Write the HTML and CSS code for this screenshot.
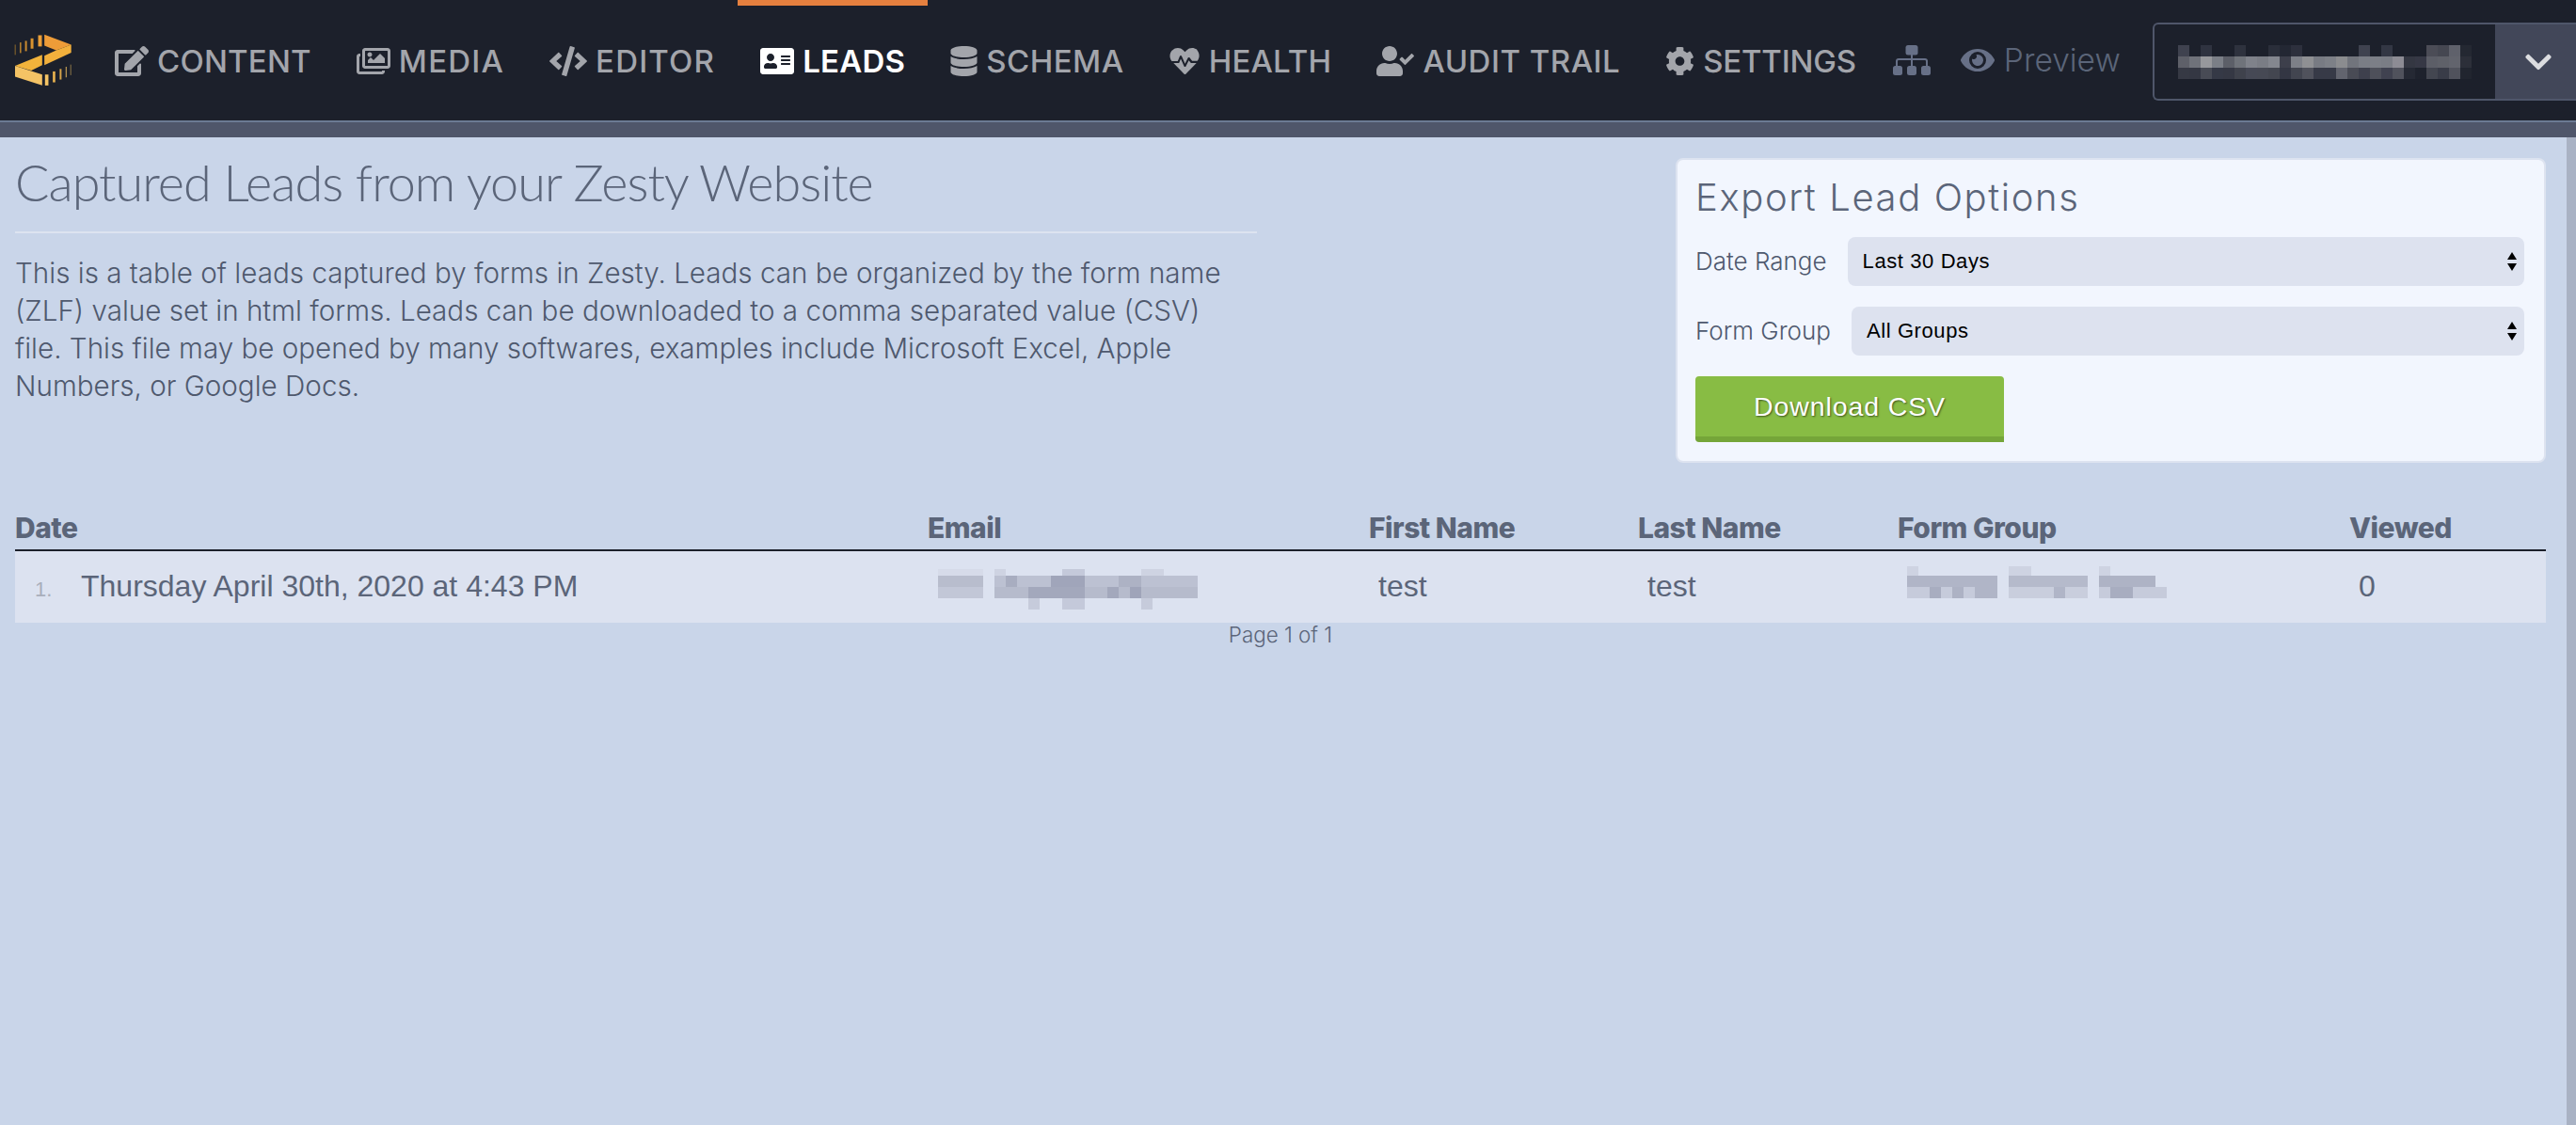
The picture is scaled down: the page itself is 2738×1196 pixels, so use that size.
FILE: index.html
```html
<!DOCTYPE html>
<html lang="en">
<head>
<meta charset="utf-8">
<title>Leads</title>
<link rel="stylesheet" href="styles.css">
</head>
<body>
<header class="topbar">
  <svg class="logo" viewBox="45 48 187 168" aria-hidden="true">
    <polygon points="142,50 228,82 180,100 142,85" fill="#ee9c38"/>
    <polygon points="228,82 228,108 142,148 142,118 180,100" fill="#f2b03c"/>
    <polygon points="135,115 48,150 100,165 135,148" fill="#f2b33b"/>
    <polygon points="48,150 135,178 135,213 48,185" fill="#f4c365"/>
    <g fill="#d8922f">
      <rect x="47" y="82" width="3" height="33" fill="#8f6a2c"/>
      <rect x="63" y="75" width="5" height="34" fill="#b07c2e"/>
      <rect x="80" y="70" width="6" height="33" fill="#c98a30"/>
      <rect x="98" y="62" width="9" height="33"/>
      <rect x="122" y="52" width="12" height="36" fill="#ec9f38"/>
    </g>
    <g fill="#e8b24e">
      <rect x="144" y="178" width="11" height="35" fill="#f4c365"/>
      <rect x="169" y="168" width="8" height="35"/>
      <rect x="191" y="160" width="6" height="34" fill="#d6a349"/>
      <rect x="210" y="153" width="4" height="34" fill="#b08f50"/>
      <rect x="225" y="146" width="3" height="34" fill="#8c7748"/>
    </g>
  </svg>
  <nav class="nav">
    <a class="nav-item"><svg class="ico" viewBox="0 0 576 512"><path d="M402.6 83.2l90.2 90.2c3.8 3.8 3.8 10 0 13.8L274.4 405.6l-92.8 10.3c-12.4 1.4-22.9-9.1-21.5-21.5l10.3-92.8L388.8 83.2c3.8-3.8 10-3.8 13.8 0zm162-22.9l-48.8-48.8c-15.2-15.2-39.9-15.2-55.2 0l-35.4 35.4c-3.8 3.8-3.8 10 0 13.8l90.2 90.2c3.8 3.8 10 3.8 13.8 0l35.4-35.4c15.2-15.3 15.2-40 0-55.2zM384 346.2V448H64V128h229.8c3.2 0 6.2-1.3 8.5-3.5l40-40c7.6-7.6 2.2-20.5-8.5-20.5H48C21.5 64 0 85.5 0 112v352c0 26.5 21.5 48 48 48h352c26.5 0 48-21.5 48-48V306.2c0-10.7-12.9-16-20.5-8.5l-40 40c-2.2 2.3-3.5 5.3-3.5 8.5z"/></svg>CONTENT</a>
    <a class="nav-item spaced-lg"><svg class="ico" viewBox="0 0 576 512"><path d="M480 416v16c0 26.51-21.49 48-48 48H48c-26.51 0-48-21.49-48-48V176c0-26.51 21.49-48 48-48h16v48H54a6 6 0 0 0-6 6v244a6 6 0 0 0 6 6h372a6 6 0 0 0 6-6v-10h48zm42-336H150a6 6 0 0 0-6 6v244a6 6 0 0 0 6 6h372a6 6 0 0 0 6-6V86a6 6 0 0 0-6-6zm6-48c26.51 0 48 21.49 48 48v256c0 26.51-21.49 48-48 48H144c-26.51 0-48-21.49-48-48V80c0-26.51 21.49-48 48-48h384zM264 144c0 22.091-17.909 40-40 40s-40-17.909-40-40 17.909-40 40-40 40 17.909 40 40zm-72 96l39.515-39.515c4.686-4.686 12.284-4.686 16.971 0L288 240l103.515-103.515c4.686-4.686 12.284-4.686 16.971 0L480 208v80H192v-48z"/></svg>MEDIA</a>
    <a class="nav-item spaced-lg"><svg class="ico ico-wide" viewBox="0 0 640 512"><path d="M278.9 511.5l-61-17.7c-6.4-1.8-10-8.5-8.2-14.9L346.2 8.7c1.8-6.4 8.5-10 14.9-8.2l61 17.7c6.4 1.8 10 8.5 8.2 14.9L293.8 503.3c-1.9 6.4-8.5 10.1-14.9 8.2zm-114-112.2l43.5-46.4c4.6-4.9 4.3-12.7-.8-17.2L117 256l90.6-79.7c5.1-4.5 5.5-12.3.8-17.2l-43.5-46.4c-4.5-4.8-12.1-5.1-17-.5L3.8 247.2c-5.1 4.7-5.1 12.8 0 17.5l144.1 135.1c4.9 4.6 12.5 4.4 17-.5zm327.2.6l144.1-135.1c5.1-4.7 5.1-12.8 0-17.5L492.1 112.1c-4.8-4.5-12.4-4.3-17 .5L431.6 159c-4.6 4.9-4.3 12.7.8 17.2L523 256l-90.6 79.7c-5.1 4.5-5.5 12.3-.8 17.2l43.5 46.4c4.5 4.9 12.1 5.1 17 .6z"/></svg>EDITOR</a>
    <a class="nav-item is-active"><svg class="ico" viewBox="0 0 576 512"><path d="M528 32H48C21.5 32 0 53.5 0 80v352c0 26.5 21.5 48 48 48h480c26.5 0 48-21.5 48-48V80c0-26.5-21.5-48-48-48zm-352 96c35.3 0 64 28.7 64 64s-28.7 64-64 64-64-28.7-64-64 28.7-64 64-64zm112 236.8c0 10.6-10 19.2-22.4 19.2H86.4C74 384 64 375.4 64 364.8v-19.2c0-31.8 30.1-57.6 67.2-57.6h5c12.3 5.1 25.7 8 39.8 8s27.6-2.9 39.8-8h5c37.1 0 67.2 25.8 67.2 57.6v19.2zM512 312c0 4.4-3.6 8-8 8H360c-4.4 0-8-3.6-8-8v-16c0-4.4 3.6-8 8-8h144c4.4 0 8 3.6 8 8v16zm0-64c0 4.4-3.6 8-8 8H360c-4.4 0-8-3.6-8-8v-16c0-4.4 3.6-8 8-8h144c4.4 0 8 3.6 8 8v16zm0-64c0 4.4-3.6 8-8 8H360c-4.4 0-8-3.6-8-8v-16c0-4.4 3.6-8 8-8h144c4.4 0 8 3.6 8 8v16z"/></svg>LEADS</a>
    <a class="nav-item spaced-sm"><svg class="ico ico-db" viewBox="0 0 448 512"><path d="M448 73.143v45.714C448 159.143 347.667 192 224 192S0 159.143 0 118.857V73.143C0 32.857 100.333 0 224 0s224 32.857 224 73.143zM448 176v102.857C448 319.143 347.667 352 224 352S0 319.143 0 278.857V176c48.125 33.143 136.208 48.572 224 48.572S399.874 209.143 448 176zm0 160v102.857C448 479.143 347.667 512 224 512S0 479.143 0 438.857V336c48.125 33.143 136.208 48.572 224 48.572S399.874 369.143 448 336z"/></svg>SCHEMA</a>
    <a class="nav-item"><svg class="ico ico-heart" viewBox="0 0 512 512"><path d="M320.2 243.8l-49.7 99.4c-6 12.1-23.4 11.7-28.9-.6l-56.9-126.3-30 71.7H60.6l182.5 186.5c7.1 7.3 18.6 7.3 25.7 0L451.4 288h-93.6l-37.6-44.2zM473.7 73.9l-2.4-2.5c-51.5-52.6-135.8-52.6-187.4 0L256 100l-27.9-28.5c-51.5-52.7-135.9-52.7-187.4 0l-2.4 2.4C-10.4 123.7-12.5 203 31 256h102.4l35.9-86.2c5.4-12.9 23.6-13.2 29.4-.4l58.2 129.3 49-97.9c5.6-11.1 20.7-12.9 28.8-3.5l43.1 52.8h88.7c43.5-53 41.4-132.3-7.6-182z"/></svg>HEALTH</a>
    <a class="nav-item spaced-sm"><svg class="ico ico-wide" viewBox="0 0 640 512"><path d="M224 256c70.7 0 128-57.3 128-128S294.7 0 224 0 96 57.3 96 128s57.3 128 128 128zm89.6 32h-16.7c-22.2 10.2-46.9 16-72.9 16s-50.6-5.8-72.9-16h-16.7C60.2 288 0 348.2 0 422.4V464c0 26.5 21.5 48 48 48h352c26.5 0 48-21.5 48-48v-41.6c0-74.2-60.2-134.4-134.4-134.4zm323-128.4l-27.8-28.1c-4.6-4.7-12.1-4.7-16.8-.1l-104.8 104-45.5-45.8c-4.6-4.7-12.1-4.7-16.8-.1l-28.1 27.9c-4.7 4.6-4.7 12.1-.1 16.8l81.7 82.3c4.6 4.7 12.1 4.7 16.8.1l141.3-140.2c4.6-4.7 4.7-12.2.1-16.8z"/></svg>AUDIT TRAIL</a>
    <a class="nav-item spaced-none"><svg class="ico ico-gear" viewBox="0 0 512 512"><path d="M487.4 315.7l-42.6-24.6c4.3-23.2 4.3-47 0-70.2l42.6-24.6c4.9-2.8 7.1-8.6 5.5-14-11.1-35.6-30-67.8-54.7-94.6-3.8-4.1-10-5.1-14.8-2.3L380.8 110c-17.9-15.4-38.5-27.3-60.8-35.1V25.8c0-5.6-3.9-10.5-9.4-11.7-36.7-8.2-74.3-7.8-109.2 0-5.5 1.2-9.4 6.1-9.4 11.7V75c-22.2 7.9-42.8 19.8-60.8 35.1L88.7 85.5c-4.9-2.8-11-1.9-14.8 2.3-24.7 26.7-43.6 58.9-54.7 94.6-1.7 5.4.6 11.2 5.5 14L67.3 221c-4.3 23.2-4.3 47 0 70.2l-42.6 24.6c-4.9 2.8-7.1 8.6-5.5 14 11.1 35.6 30 67.8 54.7 94.6 3.8 4.1 10 5.1 14.8 2.3l42.6-24.6c17.9 15.4 38.5 27.3 60.8 35.1v49.2c0 5.6 3.9 10.5 9.4 11.7 36.7 8.2 74.3 7.8 109.2 0 5.5-1.2 9.4-6.1 9.4-11.7v-49.2c22.2-7.9 42.8-19.8 60.8-35.1l42.6 24.6c4.9 2.8 11 1.9 14.8-2.3 24.7-26.7 43.6-58.9 54.7-94.6 1.5-5.5-.7-11.3-5.6-14.1zM256 336c-44.1 0-80-35.9-80-80s35.9-80 80-80 80 35.9 80 80-35.9 80-80 80z"/></svg>SETTINGS</a>
  </nav>
  <svg class="sitemap" viewBox="0 0 40 32"><rect x="13.500" y="0" width="13" height="10.500" rx="2.500"/><path d="M19 10h2v4h13a3 3 0 0 1 3 3v5h-2v-5a1 1 0 0 0-1-1H21v6h-2v-6H6a1 1 0 0 0-1 1v5H3v-5a3 3 0 0 1 3-3h13z"/><rect x="0" y="22" width="10" height="10" rx="2.500"/><rect x="15" y="22" width="10" height="10" rx="2.500"/><rect x="30" y="22" width="10" height="10" rx="2.500"/></svg>
  <a class="preview"><svg class="eye" viewBox="0 0 576 512"><path d="M572.52 241.4C518.29 135.59 410.93 64 288 64S57.68 135.64 3.48 241.41a32.35 32.35 0 0 0 0 29.19C57.71 376.41 165.07 448 288 448s230.32-71.64 284.52-177.41a32.35 32.35 0 0 0 0-29.19zM288 400a144 144 0 1 1 144-144 143.93 143.93 0 0 1-144 144zm0-240a95.31 95.31 0 0 0-25.31 3.79 47.85 47.85 0 0 1-66.9 66.9A95.78 95.78 0 1 0 288 160z"/></svg>Preview</a>
  <div class="account">
    <div class="account-name">
      <svg class="mosaic-nav" viewBox="0 0 26 3" shape-rendering="crispEdges">
        <rect x="0" y="0" width="1" height="1" fill="#3f424f"/><rect x="2" y="0" width="1" height="1" fill="#2f3340"/><rect x="5" y="0" width="1" height="1" fill="#2e323e"/><rect x="8" y="0" width="1" height="1" fill="#2a2e3a"/><rect x="9" y="0" width="1" height="1" fill="#232733"/><rect x="10" y="0" width="1" height="1" fill="#2d303d"/><rect x="16" y="0" width="1" height="1" fill="#3f424f"/><rect x="18" y="0" width="1" height="1" fill="#333744"/><rect x="22" y="0" width="1" height="1" fill="#4b4c56"/><rect x="23" y="0" width="1" height="1" fill="#454751"/><rect x="24" y="0" width="1" height="1" fill="#5f616b"/><rect x="25" y="0" width="1" height="1" fill="#242832"/>
        <rect x="0" y="1" width="1" height="1" fill="#5e6069"/><rect x="1" y="1" width="1" height="1" fill="#6f727a"/><rect x="2" y="1" width="1" height="1" fill="#97989c"/><rect x="3" y="1" width="1" height="1" fill="#7b7f87"/><rect x="4" y="1" width="1" height="1" fill="#5c5f68"/><rect x="5" y="1" width="1" height="1" fill="#6f737a"/><rect x="6" y="1" width="1" height="1" fill="#7f828a"/><rect x="7" y="1" width="1" height="1" fill="#7a7d85"/><rect x="8" y="1" width="1" height="1" fill="#84878f"/><rect x="9" y="1" width="1" height="1" fill="#3d3f4b"/><rect x="10" y="1" width="1" height="1" fill="#7d8088"/><rect x="11" y="1" width="1" height="1" fill="#8f9093"/><rect x="12" y="1" width="1" height="1" fill="#787b83"/><rect x="13" y="1" width="1" height="1" fill="#7d8087"/><rect x="14" y="1" width="1" height="1" fill="#8b8c8f"/><rect x="15" y="1" width="1" height="1" fill="#71747c"/><rect x="16" y="1" width="1" height="1" fill="#7a7d85"/><rect x="17" y="1" width="1" height="1" fill="#7c7f87"/><rect x="18" y="1" width="1" height="1" fill="#7a7d85"/><rect x="19" y="1" width="1" height="1" fill="#8d8c94"/><rect x="20" y="1" width="1" height="1" fill="#343742"/><rect x="21" y="1" width="1" height="1" fill="#363845"/><rect x="22" y="1" width="1" height="1" fill="#5c5e67"/><rect x="23" y="1" width="1" height="1" fill="#5f6169"/><rect x="24" y="1" width="1" height="1" fill="#62646d"/><rect x="25" y="1" width="1" height="1" fill="#2c2f39"/>
        <rect x="0" y="2" width="1" height="1" fill="#363944"/><rect x="1" y="2" width="1" height="1" fill="#343743"/><rect x="2" y="2" width="1" height="1" fill="#484b55"/><rect x="3" y="2" width="1" height="1" fill="#353946"/><rect x="4" y="2" width="1" height="1" fill="#353844"/><rect x="5" y="2" width="1" height="1" fill="#3f424c"/><rect x="6" y="2" width="1" height="1" fill="#464955"/><rect x="7" y="2" width="1" height="1" fill="#464954"/><rect x="8" y="2" width="1" height="1" fill="#434650"/><rect x="9" y="2" width="1" height="1" fill="#333643"/><rect x="10" y="2" width="1" height="1" fill="#424550"/><rect x="11" y="2" width="1" height="1" fill="#50525c"/><rect x="12" y="2" width="1" height="1" fill="#373a47"/><rect x="13" y="2" width="1" height="1" fill="#373a47"/><rect x="14" y="2" width="1" height="1" fill="#62646e"/><rect x="15" y="2" width="1" height="1" fill="#494b55"/><rect x="16" y="2" width="1" height="1" fill="#3e404d"/><rect x="17" y="2" width="1" height="1" fill="#4e505a"/><rect x="18" y="2" width="1" height="1" fill="#404250"/><rect x="19" y="2" width="1" height="1" fill="#50525c"/><rect x="20" y="2" width="1" height="1" fill="#252934"/><rect x="21" y="2" width="1" height="1" fill="#1e222d"/><rect x="22" y="2" width="1" height="1" fill="#434650"/><rect x="23" y="2" width="1" height="1" fill="#393c48"/><rect x="24" y="2" width="1" height="1" fill="#50525c"/><rect x="25" y="2" width="1" height="1" fill="#21252f"/>
      </svg>
    </div>
    <div class="account-toggle"><svg class="chevron" viewBox="0 0 448 512"><path d="M207.029 381.476L12.686 187.132c-9.373-9.373-9.373-24.569 0-33.941l22.667-22.667c9.357-9.357 24.522-9.375 33.901-.04L224 284.505l154.745-154.021c9.379-9.335 24.544-9.317 33.901.04l22.667 22.667c9.373 9.373 9.373 24.569 0 33.941L240.971 381.476c-9.373 9.372-24.569 9.372-33.942 0z"/></svg></div>
  </div>
</header>
<div class="subbar"></div>
<div class="page">
  <main class="main">
    <section class="intro">
      <div class="intro-copy">
        <h1 class="title">Captured Leads from your Zesty Website</h1>
        <p class="lede">This is a table of leads captured by forms in Zesty. Leads can be organized by the form name (ZLF) value set in html forms. Leads can be downloaded to a comma separated value (CSV) file. This file may be opened by many softwares, examples include Microsoft Excel, Apple Numbers, or Google Docs.</p>
      </div>
      <aside class="export">
        <h2 class="export-title">Export Lead Options</h2>
        <div class="field"><label class="field-label">Date Range</label><div class="select">Last 30 Days<span class="arrows"></span></div></div>
        <div class="field"><label class="field-label">Form Group</label><div class="select">All Groups<span class="arrows"></span></div></div>
        <button class="download">Download CSV</button>
      </aside>
    </section>
    <section class="table">
      <div class="row head">
        <div class="c-date">Date</div><div class="c-email">Email</div><div class="c-first">First Name</div><div class="c-last">Last Name</div><div class="c-group">Form Group</div><div class="c-viewed">Viewed</div>
      </div>
      <div class="row body-row">
        <div class="c-date"><span class="num">1.</span>Thursday April 30th, 2020 at 4:43 PM</div>
        <div class="c-email"><svg class="mosaic-email" viewBox="0 0 276 43" shape-rendering="crispEdges">
          <rect x="0" y="0" width="48" height="7" fill="#d6dbe9"/><rect x="60" y="0" width="12" height="7" fill="#ced3e2"/><rect x="132" y="0" width="24" height="7" fill="#c4c9da"/><rect x="216" y="0" width="24" height="7" fill="#ced3e2"/>
          <rect x="0" y="7" width="48" height="12" fill="#b8bdcd"/><rect x="60" y="7" width="216" height="12" fill="#bcc1d2"/>
          <rect x="72" y="7" width="12" height="12" fill="#a8adc0"/><rect x="120" y="7" width="36" height="12" fill="#a0a5ba"/><rect x="192" y="7" width="24" height="12" fill="#adb2c4"/>
          <rect x="0" y="19" width="48" height="12" fill="#c2c7d7"/><rect x="60" y="19" width="216" height="12" fill="#b6bbcc"/>
          <rect x="96" y="19" width="60" height="12" fill="#a3a8bc"/><rect x="180" y="19" width="12" height="12" fill="#a3a8bc"/><rect x="204" y="19" width="12" height="12" fill="#9fa4b9"/>
          <rect x="96" y="31" width="12" height="12" fill="#c6cbdb"/><rect x="132" y="31" width="24" height="12" fill="#c4c9da"/><rect x="216" y="31" width="12" height="12" fill="#c6cbdb"/>
        </svg></div>
        <div class="c-first">test</div>
        <div class="c-last">test</div>
        <div class="c-group"><svg class="mosaic-group" viewBox="0 0 276 34" shape-rendering="crispEdges">
          <rect x="0" y="0" width="12" height="10" fill="#ced3e2"/><rect x="108" y="0" width="24" height="10" fill="#ced3e2"/><rect x="204" y="0" width="12" height="10" fill="#ced3e2"/>
          <rect x="0" y="10" width="96" height="12" fill="#b0b5c7"/><rect x="108" y="10" width="84" height="12" fill="#b5bacb"/><rect x="204" y="10" width="60" height="12" fill="#aeb3c5"/>
          <rect x="0" y="22" width="96" height="12" fill="#c6cbdb"/><rect x="108" y="22" width="84" height="12" fill="#c9cedd"/><rect x="204" y="22" width="72" height="12" fill="#c6cbdb"/>
          <rect x="24" y="22" width="12" height="12" fill="#a8adc0"/><rect x="48" y="22" width="12" height="12" fill="#adb2c4"/><rect x="72" y="22" width="24" height="12" fill="#b0b5c7"/><rect x="156" y="22" width="12" height="12" fill="#b0b5c7"/><rect x="216" y="22" width="24" height="12" fill="#a8adc0"/>
        </svg></div>
        <div class="c-viewed">0</div>
      </div>
      <p class="pager">Page 1 of 1</p>
    </section>
  </main>
  <div class="scrollbar"></div>
</div>
</body>
</html>
```

FILE: styles.css
```css
* { box-sizing: border-box; }
html, body { margin: 0; height: 100%; overflow: hidden; }
body { background: #c9d5e9; color: #5b6579; font-family: Inter, "Open Sans", sans-serif; display: flex; flex-direction: column; }
.topbar { height: 128px; flex: none; background: #1c202b; display: flex; align-items: center; padding-left: 15px; }
.logo { width: 62px; height: 56px; flex: none; margin-right: 21px; }
.nav { display: flex; align-self: stretch; }
.nav-item { display: flex; align-items: center; gap: 9px; padding: 0 24px 4px; color: #a3a5ab; font-size: 33px; font-weight: 500; letter-spacing: .2px; border-top: 6px solid transparent; white-space: nowrap; }
.nav-item.spaced-lg { letter-spacing: 1.2px; }
.nav-item.spaced-sm { letter-spacing: .5px; }
.nav-item.spaced-none { letter-spacing: -.2px; }
.nav-item.is-active { color: #fff; border-top-color: #e5803f; font-weight: 600; }
.ico { height: 32px; width: 36px; fill: currentColor; flex: none; }
.ico-wide { width: 40px; }
.ico-db { width: 29px; }
.ico-heart { width: 33px; }
.ico-gear { width: 31px; }
.sitemap { width: 40px; height: 32px; fill: #677087; flex: none; margin-left: 15px; }
.preview { display: flex; align-items: center; gap: 10px; margin: 0 34px 0 32px; font-size: 33.5px; font-weight: 300; color: #5b6579; }
.eye { width: 36px; height: 32px; fill: #677087; }
.account { flex: 1; align-self: flex-start; height: 83px; margin-top: 24px; display: flex; border: 2px solid #4f566a; border-right: 0; border-radius: 6px 0 0 6px; }
.account-name { flex: 1; display: flex; align-items: center; padding-left: 25px; }
.mosaic-nav { width: 312px; height: 36px; }
.account-toggle { width: 86px; background: #424759; display: flex; align-items: center; justify-content: center; padding-left: 6px; }
.chevron { width: 28px; height: 32px; fill: #dcdde0; }
.subbar { height: 18px; flex: none; background: #4f566a; border-top: 2px solid #6b7a93; }
.page { flex: 1; display: flex; min-height: 0; }
.main { flex: 1; padding: 0 22px 0 16px; min-width: 0; }
.scrollbar { width: 10px; flex: none; background: #a9b2c4; }
.intro { display: flex; justify-content: space-between; align-items: flex-start; padding-top: 22px; }
.intro-copy { width: 1320px; }
.title { margin: 0; font-family: Lato, sans-serif; font-size: 54px; font-weight: 300; line-height: 52px; letter-spacing: -1px; padding-bottom: 26px; border-bottom: 2px solid #dde3f0; color: #5b6579; }
.lede { margin: 22px 0 0; max-width: 1295px; font-size: 29.6px; font-weight: 300; line-height: 40px; color: #4f596e; }
.export { width: 925px; height: 324px; background: #f2f6fe; border: 2px solid #dde3f0; border-radius: 8px; padding: 19px 21px 19px 19px; }
.export-title { margin: 0; font-size: 40px; font-weight: 300; line-height: 42px; letter-spacing: 1.6px; }
.field { display: flex; align-items: center; gap: 22px; margin-top: 22px; }
.export-title + .field { margin-top: 21px; }
.field-label { font-size: 26px; font-weight: 300; line-height: 48px; white-space: nowrap; color: #4f596e; }
.select { flex: 1; position: relative; height: 52px; padding-left: 16px; display: flex; align-items: center; background: #dde2ef; border-radius: 8px; color: #000; font-family: "Liberation Sans", sans-serif; font-size: 22px; letter-spacing: .6px; }
.arrows { position: absolute; right: 8px; top: 16px; width: 10px; height: 20px; }
.arrows::before, .arrows::after { content: ""; position: absolute; left: 0; border-left: 5px solid transparent; border-right: 5px solid transparent; }
.arrows::before { top: 0; border-bottom: 8px solid #000; }
.arrows::after { bottom: 0; border-top: 8px solid #000; }
.download { display: block; width: 328px; height: 70px; margin-top: 22px; padding: 0; background: #88bc44; border: 0; border-bottom: 6px solid #75a539; border-radius: 4px 4px 0 4px; color: #fff; font-family: "Liberation Sans", sans-serif; font-size: 28.5px; letter-spacing: .9px; text-shadow: 1px 1px 2px rgba(0,0,0,.55); }
.table { margin-top: 50px; }
.row { display: grid; grid-template-columns: 970px 469px 286px 276px 480px 209px; }
.head { font-weight: 800; font-size: 30px; height: 44px; border-bottom: 2px solid #1c202b; letter-spacing: -.5px; align-items: start; line-height: 38px; }
.body-row { height: 76px; background: #dce2f0; align-items: center; font-family: "Liberation Sans", sans-serif; font-size: 32px; }
.body-row > div { padding-left: 10px; padding-bottom: 1px; }
.body-row .c-date { padding-left: 21px; display: flex; align-items: baseline; }
.body-row .c-email { padding-left: 11px; }
.num { width: 49px; font-size: 22px; color: #a9aebb; }
.mosaic-email { display: block; width: 276px; height: 43px; margin-top: 5px; }
.mosaic-group { display: block; width: 276px; height: 34px; margin-bottom: 10px; }
.pager { margin: 0; text-align: center; font-size: 22.4px; font-weight: 300; line-height: 26px; }
```
